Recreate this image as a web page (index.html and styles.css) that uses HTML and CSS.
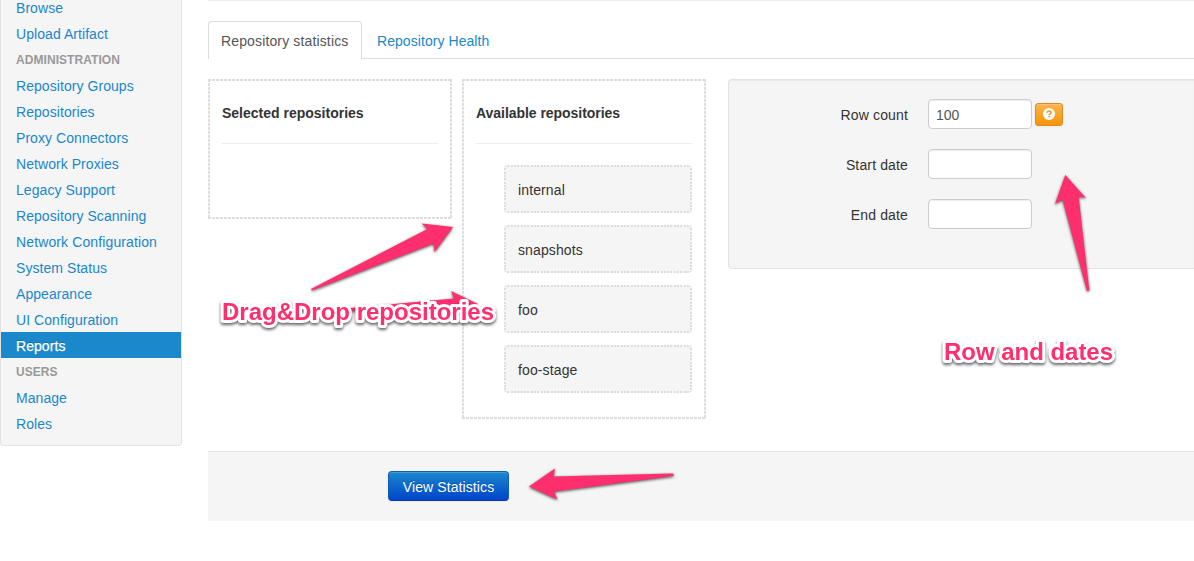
FILE: index.html
```html
<!DOCTYPE html>
<html lang="en">
<head>
<meta charset="utf-8">
<title>Reports</title>
<link rel="stylesheet" href="styles.css">
</head>
<body>
<div class="layout">
  <nav class="sidebar">
    <a class="nav-item">Browse</a>
    <a class="nav-item">Upload Artifact</a>
    <div class="nav-header">Administration</div>
    <a class="nav-item">Repository Groups</a>
    <a class="nav-item">Repositories</a>
    <a class="nav-item">Proxy Connectors</a>
    <a class="nav-item">Network Proxies</a>
    <a class="nav-item">Legacy Support</a>
    <a class="nav-item">Repository Scanning</a>
    <a class="nav-item wide">Network Configuration</a>
    <a class="nav-item">System Status</a>
    <a class="nav-item">Appearance</a>
    <a class="nav-item">UI Configuration</a>
    <a class="nav-item active">Reports</a>
    <div class="nav-header">Users</div>
    <a class="nav-item">Manage</a>
    <a class="nav-item">Roles</a>
  </nav>
  <main class="content">
    <div class="tabs">
      <a class="tab selected">Repository statistics</a>
      <a class="tab">Repository Health</a>
    </div>
    <div class="panels">
      <section class="drop selected-box">
        <h5 class="drop-title">Selected repositories</h5>
      </section>
      <section class="drop available-box">
        <h5 class="drop-title available-title">Available repositories</h5>
        <div class="repo-list">
          <div class="repo">internal</div>
          <div class="repo">snapshots</div>
          <div class="repo">foo</div>
          <div class="repo">foo-stage</div>
        </div>
      </section>
      <form class="filters">
        <div class="field"><label class="label" for="rows">Row count</label><input class="input" id="rows" value="100"><button type="button" class="help" aria-label="Help"><svg width="14" height="14" viewBox="0 0 14 14"><circle cx="7" cy="7" r="6" fill="#fff"/><path d="M5 5.800C5.100 4.500 5.900 4 7.100 4c1.200 0 1.900.6 1.900 1.500 0 1.100-1.700 1.100-1.700 2.500" fill="none" stroke="#f79a1a" stroke-width="1.700"/><path d="M6.400 8.800h1.900v1.600H6.400z" fill="#f79a1a"/></svg></button></div>
        <div class="field"><label class="label" for="start">Start date</label><input class="input" id="start"></div>
        <div class="field"><label class="label" for="end">End date</label><input class="input" id="end"></div>
      </form>
    </div>
    <div class="actions"><button type="button" class="primary">View Statistics</button></div>
  </main>
</div>
<svg class="notes" width="1194" height="561" viewBox="0 0 1194 561">
  <g class="arrow">
    <path d="M311 289 L427.500 229 L421.500 223.500 L453 227 L434.500 252 L433.500 243.500 L312 290.500Z"/>
    <path d="M340 309 L454 298.500 L451 291 L478 304 L456 316 L455 310 L340 311Z"/>
    <path d="M1065.300 175 L1086 198 L1078.500 196.300 L1089.300 290.500 L1087 291 L1062.500 199.500 L1055 204Z"/>
    <path d="M529 486.500 L555 468.500 L553.500 476.500 L672.500 473.500 Q675 475 673 476 L554 491.500 L557.500 499.500Z"/>
  </g>
  <g class="caption">
    <text x="222" y="320" textLength="272" lengthAdjust="spacingAndGlyphs">Drag&amp;Drop repositories</text>
    <text x="944" y="360" textLength="169" lengthAdjust="spacingAndGlyphs">Row and dates</text>
  </g>
</svg>
</body>
</html>
```
FILE: styles.css
```css
* { box-sizing: border-box; }
body {
  margin: 0;
  height: 561px;
  overflow: hidden;
  position: relative;
  background: #fff;
  color: #333;
  font: 14px/20px "Liberation Sans", Arial, sans-serif;
}
.layout { display: flex; align-items: flex-start; gap: 26px; }
.sidebar {
  flex: none;
  width: 182px;
  margin-top: -6px;
  padding-bottom: 9px;
  background: #f5f5f5;
  border: 1px solid #e3e3e3;
  border-top: 0;
  border-radius: 0 0 4px 4px;
}
.nav-item, .nav-header { display: block; height: 26px; padding: 4px 15px 2px; white-space: nowrap; letter-spacing: .06px; }
.nav-item { color: #1a87cb; }
.wide { letter-spacing: .12px; }
.nav-header {
  color: #999;
  font-size: 12px;
  font-weight: bold;
  text-transform: uppercase;
}
.active { background: #1b88cc; color: #fff; text-shadow: 0 -1px 0 rgba(0,0,0,.2); -webkit-text-stroke: .25px #fff; }
.content { flex: 1; min-width: 0; border-top: 1px solid #eee; padding-top: 20px; }
.tabs { display: flex; gap: 2px; height: 38px; border-bottom: 1px solid #ddd; }
.tab {
  height: 38px;
  padding: 9px 12px;
  border: 1px solid transparent;
  border-bottom: 0;
  border-radius: 4px 4px 0 0;
  color: #1a87cb;
  letter-spacing: .06px;
}
.selected { width: 154px; padding-right: 0; background: #fff; color: #555; border-color: #ddd; letter-spacing: .14px; }
.panels { display: flex; align-items: flex-start; height: 392px; padding-top: 20px; }
/* Fine 2px dashes along the four edges; --on is the dash, --step its period. */
.drop, .repo {
  --on: 3px;
  --step: 4px;
  --fill: #fff;
  background:
    repeating-linear-gradient(90deg, #ddd 0 var(--on), transparent var(--on) var(--step)) 0 0 / 100% 2px no-repeat,
    repeating-linear-gradient(90deg, #ddd 0 var(--on), transparent var(--on) var(--step)) 0 100% / 100% 2px no-repeat,
    repeating-linear-gradient(180deg, #ddd 0 var(--on), transparent var(--on) var(--step)) 0 0 / 2px 100% no-repeat,
    repeating-linear-gradient(180deg, #ddd 0 var(--on), transparent var(--on) var(--step)) 100% 0 / 2px 100% no-repeat,
    var(--fill);
}
.drop { flex: none; width: 244px; padding: 14px; }
.selected-box { height: 140px; margin-right: 10px; }
.available-box { height: 340px; margin-right: 22px; }
.drop-title {
  margin: 0 0 21px;
  height: 51px;
  padding-top: 10px;
  font-size: 14px;
  border-bottom: 1px solid #eee;
}
.available-title { letter-spacing: -.04px; }
.repo-list { display: grid; gap: 12px; padding-left: 28px; }
.repo {
  --on: 2px;
  --step: 3.33px;
  --fill: #f5f5f5;
  height: 48px;
  padding: 15px 14px;
  border-radius: 4px;
  letter-spacing: .12px;
}
.filters {
  flex: 1;
  height: 190px;
  padding: 19px 0 0 19px;
  display: grid;
  grid-auto-rows: 30px;
  gap: 20px;
  background: #f5f5f5;
  border: 1px solid #e3e3e3;
  border-right: 0;
  border-radius: 4px 0 0 4px;
  box-shadow: inset 0 1px 1px rgba(0,0,0,.05);
}
.field { display: flex; align-items: center; }
.label { width: 160px; margin-right: 20px; padding-top: 2px; text-align: right; letter-spacing: .14px; }
.input {
  width: 104px;
  height: 30px;
  padding: 5px 7px 3px;
  border: 1px solid #ccc;
  border-radius: 4px;
  background: #fff;
  color: #555;
  font: 14px/20px "Liberation Sans", Arial, sans-serif;
  box-shadow: inset 0 1px 1px rgba(0,0,0,.075);
}
.help {
  display: flex;
  align-items: center;
  justify-content: center;
  width: 28px;
  height: 23px;
  margin-left: 3px;
  padding: 0;
  border: 1px solid #d98b24;
  border-radius: 3px;
  background: linear-gradient(#fbb450, #f89406);
  box-shadow: inset 0 1px 0 rgba(255,255,255,.2), 0 1px 2px rgba(0,0,0,.05);
}
.actions { height: 70px; padding: 19px 0 0 180px; background: #f5f5f5; border-top: 1px solid #e5e5e5; }
.primary {
  width: 121px;
  height: 30px;
  padding: 2px 0 0;
  border: 1px solid #0d5fb4;
  border-bottom-color: #0a3b9c;
  border-radius: 4px;
  background: linear-gradient(#1b88cc, #0044cc);
  color: #fff;
  font: 14px/20px "Liberation Sans", Arial, sans-serif;
  letter-spacing: .1px;
  text-shadow: 0 -1px 0 rgba(0,0,0,.25);
  box-shadow: inset 0 1px 0 rgba(255,255,255,.2), 0 1px 2px rgba(0,0,0,.05);
}
.notes { position: absolute; left: 0; top: 0; pointer-events: none; }
.arrow { fill: #ff2f6e; filter: drop-shadow(0 1.500px 1.500px rgba(0,0,0,.7)); }
.caption {
  fill: #ff2f6e;
  stroke: #fff;
  stroke-width: 6px;
  stroke-linejoin: round;
  paint-order: stroke;
  font: bold 24px "Liberation Sans", Arial, sans-serif;
  filter: drop-shadow(0 2px 1.500px rgba(0,0,0,.6));
}
```
